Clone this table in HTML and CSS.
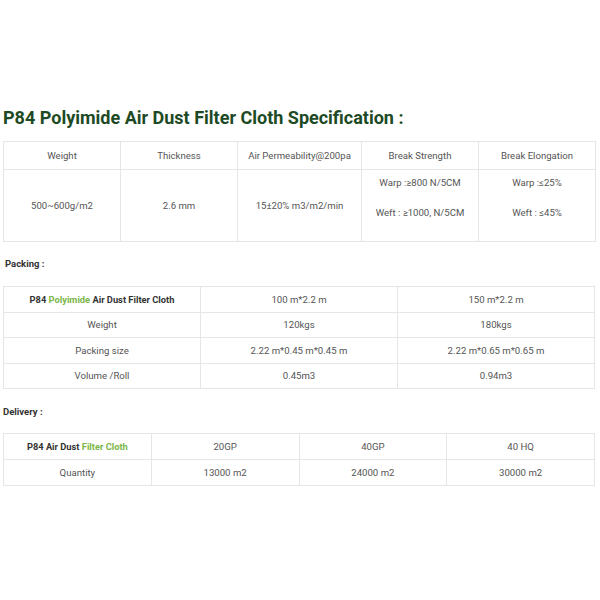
FILE: index.html
```html
<!DOCTYPE html>
<html>
<head>
<meta charset="utf-8">
<link rel="stylesheet" href="styles.css">
</head>
<body>
<div class="page">
  <h2 class="title">P84 Polyimide Air Dust Filter Cloth Specification :</h2>
  <table class="spec">
    <colgroup><col class="c117"><col class="c117"><col class="c124"><col class="c117"><col class="c117"></colgroup>
    <tr class="head">
      <td>Weight</td><td>Thickness</td><td>Air Permeability@200pa</td><td>Break Strength</td><td>Break Elongation</td>
    </tr>
    <tr class="body">
      <td>500~600g/m2</td>
      <td>2.6 mm</td>
      <td>15±20% m3/m2/min</td>
      <td><p>Warp :≥800 N/5CM</p><p>Weft : ≥1000, N/5CM</p></td>
      <td><p>Warp :≤25%</p><p>Weft : ≤45%</p></td>
    </tr>
  </table>

  <p class="label label-packing">Packing :</p>
  <table class="pack">
    <tr><td class="strong">P84 <span class="green">Polyimide</span> Air Dust Filter Cloth</td><td>100 m*2.2 m</td><td>150 m*2.2 m</td></tr>
    <tr><td>Weight</td><td>120kgs</td><td>180kgs</td></tr>
    <tr><td>Packing size</td><td>2.22 m*0.45 m*0.45 m</td><td>2.22 m*0.65 m*0.65 m</td></tr>
    <tr><td>Volume /Roll</td><td>0.45m3</td><td>0.94m3</td></tr>
  </table>

  <p class="label label-delivery">Delivery :</p>
  <table class="deliv">
    <tr><td class="strong">P84 Air Dust <span class="green">Filter Cloth</span></td><td>20GP</td><td>40GP</td><td>40 HQ</td></tr>
    <tr><td>Quantity</td><td>13000 m2</td><td>24000 m2</td><td>30000 m2</td></tr>
  </table>
</div>
</body>
</html>
```
FILE: styles.css
```css
html, body {
  margin: 0;
  padding: 0;
  background: #fff;
}
body {
  font-family: Roboto, "Liberation Sans", sans-serif;
  color: #555;
}
.page {
  padding: 0 5px 0 3px;
}
.title {
  margin: 0;
  padding-top: 107px;
  font-size: 18px;
  line-height: 22px;
  font-weight: 700;
  color: #1d4a25;
}
table {
  width: 592px;
  border-collapse: collapse;
  table-layout: fixed;
}
td {
  border: 1px solid #e6e6e6;
  text-align: center;
  font-size: 9.6px;
  color: #555;
  padding: 0 4px;
  vertical-align: middle;
}
.spec {
  margin-top: 12px;
}
.c117 { width: 117px; }
.c124 { width: 124px; }
.spec .head td { height: 27px; }
.spec .body td { height: 71px; }
.spec p {
  margin: 0 0 16px;
  line-height: 14px;
}
.label {
  margin: 0;
  font-size: 9.5px;
  font-weight: 700;
  color: #333;
  line-height: 12px;
}
.label-packing {
  margin-top: 16px;
  padding-left: 2px;
}
.pack {
  margin-top: 16px;
}
.pack td { height: 24.5px; }
.label-delivery {
  margin-top: 17px;
}
.deliv {
  margin-top: 15px;
}
.deliv td { height: 25px; }
.strong {
  font-weight: 700;
  color: #333;
  font-size: 9.3px;
}
.green {
  color: #7ab648;
}
```
